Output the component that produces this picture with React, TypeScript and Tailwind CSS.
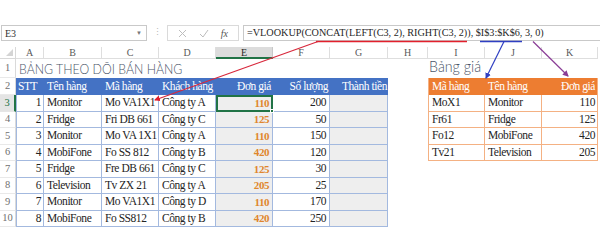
import React from "react";

const serif = { fontFamily: '"Liberation Serif", "Times New Roman", serif' };
const sans = { fontFamily: 'Lato, "Open Sans", "Liberation Sans", sans-serif' };

type Row = [number, string, string, string, number, number];
const rows: Row[] = [
  [1, "Monitor", "Mo VA1X1", "Công ty A", 110, 200],
  [2, "Fridge", "Fri DB 661", "Công ty C", 125, 50],
  [3, "Monitor", "Mo VA 1X1", "Công ty A", 110, 150],
  [4, "MobiFone", "Fo SS 812", "Công ty B", 420, 120],
  [5, "Fridge", "Fre DB 661", "Công ty C", 125, 30],
  [6, "Television", "Tv ZX 21", "Công ty A", 205, 25],
  [7, "Monitor", "Mo VA1X1", "Công ty D", 110, 170],
  [8, "MobiFone", "Fo SS812", "Công ty B", 420, 250],
];

const price: [string, string, number][] = [
  ["MoX1", "Monitor", 110],
  ["Fr61", "Fridge", 125],
  ["Fo12", "MobiFone", 420],
  ["Tv21", "Television", 205],
];

const letters = ["A", "B", "C", "D", "E", "F", "G", "H", "I", "J", "K"];

function RowHead({ n, active }: { n: number; active?: boolean }) {
  return (
    <div
      className={
        active
          ? "flex items-center justify-center text-[10.5px] tracking-normal text-[#217346] border-b border-[#e6e6e6] border-r-2 border-r-[#217346] bg-[#e4e4e4]"
          : "flex items-center justify-center text-[10.5px] tracking-normal text-[#707070] border-b border-[#e9e9e9] border-r border-r-[#dadada]"
      }
    >
      {n}
    </div>
  );
}

export default function App() {
  return (
    <div className="relative w-[600px] h-[250px] bg-white overflow-hidden text-[#242424]" style={serif}>
      {/* top blank */}
      <div className="h-[25px]" />
      {/* formula bar */}
      <div className="flex h-[16px] items-stretch">
        <div className="ml-[1px] w-[146px] border border-[#c9c9c9] flex items-center justify-between pl-[3px] pr-[4px]">
          <span className="text-[10px] text-[#333]">E3</span>
          <span className="text-[6px] text-[#777]">▼</span>
        </div>
        <div className="w-[20px] flex items-center justify-center text-[9px] text-[#b8b8b8]">⋮</div>
        <div className="w-[72px] border border-[#dadada] flex items-center justify-around px-[4px]">
          <svg width="9" height="9" viewBox="0 0 9 9">
            <path d="M1 1 L8 8 M8 1 L1 8" stroke="#bdbdbd" strokeWidth="1" />
          </svg>
          <svg width="10" height="9" viewBox="0 0 10 9">
            <path d="M1 5 L4 8 L9 1" stroke="#bdbdbd" strokeWidth="1" fill="none" />
          </svg>
          <span className="italic text-[10px] text-[#555]">fx</span>
        </div>
        <div className="ml-[4px] flex-1 border border-[#c9c9c9] border-r-0 flex items-center pl-[3px] text-[10.2px] text-[#262626] whitespace-nowrap">
          =VLOOKUP(CONCAT(LEFT(C3, 2), RIGHT(C3, 2)), $I$3:$K$6, 3, 0)
        </div>
      </div>
      <div className="h-[6px]" />
      {/* sheet */}
      <div className="grid grid-cols-[16px_28px_58px_57px_57px_57px_57px_58px_40px_57px_57px_56px] grid-rows-[12px_19px_17px_repeat(8,16.5px)] text-[11.5px] tracking-[-0.45px]">
        {/* column header row */}
        <div className="relative border-r border-b border-[#d8d8d8]">
          <div className="absolute right-[2px] bottom-[2px] w-0 h-0 border-l-[7px] border-l-transparent border-b-[7px] border-b-[#d4d4d4]" />
        </div>
        {letters.map((l) => (
          <div
            key={l}
            className={
              l === "E"
                ? "flex items-center justify-center text-[10px] tracking-normal text-[#2a2a2a] bg-[#dcdcdc] border-r border-[#c8c8c8] border-b-2 border-b-[#217346]"
                : "flex items-center justify-center text-[10px] tracking-normal text-[#5a5a5a] border-r border-b border-[#dedede]"
            }
          >
            {l}
          </div>
        ))}

        {/* row 1 */}
        <RowHead n={1} />
        <div className="col-span-7 flex items-center pl-[3px] whitespace-nowrap tracking-normal">
          <span className="inline-block text-[14px] font-light text-[#4a5568] scale-x-[0.88] origin-left" style={sans}>
            BẢNG THEO DÕI BÁN HÀNG
          </span>
        </div>
        <div />
        <div className="col-span-3 flex items-end pb-[1px] pl-[1px] tracking-normal">
          <span className="inline-block text-[15px] font-light text-[#4a5568] scale-x-[0.95] origin-left" style={sans}>
            Bảng giá
          </span>
        </div>

        {/* row 2 headers */}
        <RowHead n={2} />
        <div className="bg-[#4472c4] text-white flex items-center pl-[2px]">STT</div>
        <div className="bg-[#4472c4] text-white flex items-center pl-[3px]">Tên hàng</div>
        <div className="bg-[#4472c4] text-white flex items-center pl-[3px]">Mã hàng</div>
        <div className="bg-[#4472c4] text-white flex items-center pl-[3px] whitespace-nowrap">Khách hàng</div>
        <div className="bg-[#4472c4] text-white flex items-center justify-end pr-[2px]">Đơn giá</div>
        <div className="bg-[#4472c4] text-white flex items-center justify-end pr-[2px]">Số lượng</div>
        <div className="bg-[#4472c4] text-white flex items-center justify-end pr-[1px] whitespace-nowrap">Thành tiền</div>
        <div />
        <div className="bg-[#ed7d31] text-white flex items-center pl-[3px] border-l border-[#f4b183]">Mã hàng</div>
        <div className="bg-[#ed7d31] text-white flex items-center pl-[3px]">Tên hàng</div>
        <div className="bg-[#ed7d31] text-white flex items-center justify-end pr-[2px] border-r border-[#f4b183]">Đơn giá</div>

        {/* data rows */}
        {rows.map((r, i) => {
          const p = price[i];
          return (
            <React.Fragment key={i}>
              <RowHead n={i + 3} active={i === 0} />
              <div className="flex items-center justify-end pr-[2px] border-l border-r border-b border-[#a3b9df]">{r[0]}</div>
              <div className="flex items-center pl-[3px] border-r border-b border-[#a3b9df] whitespace-nowrap">{r[1]}</div>
              <div className="flex items-center pl-[3px] border-r border-b border-[#a3b9df] whitespace-nowrap">{r[2]}</div>
              <div className="flex items-center pl-[3px] border-r border-b border-[#a3b9df] whitespace-nowrap">{r[3]}</div>
              {i === 0 ? (
                <div className="relative flex items-center justify-end pr-[2px] text-[11px] font-bold text-[#e0862c] bg-[#eeeeee] border-2 border-[#217346]">
                  {r[4]}
                  <div className="absolute -right-[3px] -bottom-[3px] w-[4px] h-[4px] bg-[#217346] border border-white" />
                </div>
              ) : (
                <div className="flex items-center justify-end pr-[3px] text-[11px] font-bold text-[#e0862c] bg-[#eeeeee] border-r border-b border-[#a3b9df]">{r[4]}</div>
              )}
              <div className="flex items-center justify-end pr-[3px] border-r border-b border-[#a3b9df]">{r[5]}</div>
              <div className="bg-[#eeeeee] border-r border-b border-[#a3b9df]" />
              <div />
              {p ? (
                <>
                  <div className="flex items-center pl-[3px] border-l border-r border-b border-[#f4b183]">{p[0]}</div>
                  <div className="flex items-center pl-[3px] border-r border-b border-[#f4b183]">{p[1]}</div>
                  <div className="flex items-center justify-end pr-[2px] border-r border-b border-[#f4b183]">{p[2]}</div>
                </>
              ) : (
                <>
                  <div />
                  <div />
                  <div />
                </>
              )}
            </React.Fragment>
          );
        })}
      </div>

      {/* annotation arrows */}
      <svg className="absolute left-0 top-0 pointer-events-none" width="600" height="250" viewBox="0 0 600 250">
        <defs>
          <marker id="ar" markerWidth="6" markerHeight="6" refX="5" refY="3" orient="auto" markerUnits="userSpaceOnUse">
            <path d="M0 0 L6 3 L0 6 Z" fill="#e2202c" />
          </marker>
          <marker id="ab" markerWidth="6" markerHeight="6" refX="5" refY="3" orient="auto" markerUnits="userSpaceOnUse">
            <path d="M0 0 L6 3 L0 6 Z" fill="#2f3fc2" />
          </marker>
          <marker id="ap" markerWidth="6" markerHeight="6" refX="5" refY="3" orient="auto" markerUnits="userSpaceOnUse">
            <path d="M0 0 L6 3 L0 6 Z" fill="#8a3c96" />
          </marker>
        </defs>
        <line x1="316" y1="41.5" x2="467" y2="41.5" stroke="#e2202c" strokeWidth="1.3" />
        <line x1="318" y1="41.5" x2="155" y2="100" stroke="#d8283c" strokeWidth="1.2" markerEnd="url(#ar)" />
        <line x1="480" y1="41.5" x2="522" y2="41.5" stroke="#2f3fc2" strokeWidth="1.3" />
        <line x1="504" y1="41.5" x2="486" y2="78" stroke="#2f3fc2" strokeWidth="1.2" markerEnd="url(#ab)" />
        <line x1="533" y1="41.5" x2="568" y2="76" stroke="#8a3c96" strokeWidth="1.2" markerEnd="url(#ap)" />
      </svg>
    </div>
  );
}
